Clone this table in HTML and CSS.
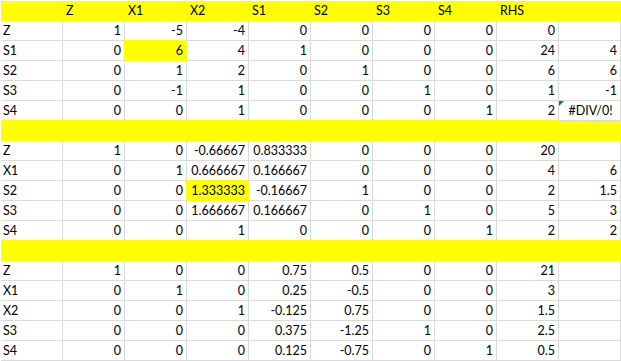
FILE: index.html
```html
<!DOCTYPE html>
<html lang="en">
<head>
<meta charset="utf-8">
<title>Simplex tableau</title>
<link rel="stylesheet" href="styles.css">
</head>
<body>
<div class="sheet">
  <div class="row head">
    <div class="c"></div><div class="c">Z</div><div class="c">X1</div><div class="c">X2</div><div class="c">S1</div><div class="c">S2</div><div class="c">S3</div><div class="c">S4</div><div class="c">RHS</div><div class="c"></div>
  </div>

  <div class="row"><div class="c t">Z</div><div class="c n">1</div><div class="c n">-5</div><div class="c n">-4</div><div class="c n">0</div><div class="c n">0</div><div class="c n">0</div><div class="c n">0</div><div class="c n">0</div><div class="c n"></div></div>
  <div class="row"><div class="c t">S1</div><div class="c n">0</div><div class="c n hl">6</div><div class="c n">4</div><div class="c n">1</div><div class="c n">0</div><div class="c n">0</div><div class="c n">0</div><div class="c n">24</div><div class="c n">4</div></div>
  <div class="row"><div class="c t">S2</div><div class="c n">0</div><div class="c n">1</div><div class="c n">2</div><div class="c n">0</div><div class="c n">1</div><div class="c n">0</div><div class="c n">0</div><div class="c n">6</div><div class="c n">6</div></div>
  <div class="row"><div class="c t">S3</div><div class="c n">0</div><div class="c n">-1</div><div class="c n">1</div><div class="c n">0</div><div class="c n">0</div><div class="c n">1</div><div class="c n">0</div><div class="c n">1</div><div class="c n">-1</div></div>
  <div class="row"><div class="c t">S4</div><div class="c n">0</div><div class="c n">0</div><div class="c n">1</div><div class="c n">0</div><div class="c n">0</div><div class="c n">0</div><div class="c n">1</div><div class="c n">2</div><div class="c err">#DIV/0!</div></div>

  <div class="band"></div>

  <div class="row"><div class="c t">Z</div><div class="c n">1</div><div class="c n">0</div><div class="c n">-0.66667</div><div class="c n">0.833333</div><div class="c n">0</div><div class="c n">0</div><div class="c n">0</div><div class="c n">20</div><div class="c n"></div></div>
  <div class="row"><div class="c t">X1</div><div class="c n">0</div><div class="c n">1</div><div class="c n">0.666667</div><div class="c n">0.166667</div><div class="c n">0</div><div class="c n">0</div><div class="c n">0</div><div class="c n">4</div><div class="c n">6</div></div>
  <div class="row"><div class="c t">S2</div><div class="c n">0</div><div class="c n">0</div><div class="c n hl">1.333333</div><div class="c n">-0.16667</div><div class="c n">1</div><div class="c n">0</div><div class="c n">0</div><div class="c n">2</div><div class="c n">1.5</div></div>
  <div class="row"><div class="c t">S3</div><div class="c n">0</div><div class="c n">0</div><div class="c n">1.666667</div><div class="c n">0.166667</div><div class="c n">0</div><div class="c n">1</div><div class="c n">0</div><div class="c n">5</div><div class="c n">3</div></div>
  <div class="row"><div class="c t">S4</div><div class="c n">0</div><div class="c n">0</div><div class="c n">1</div><div class="c n">0</div><div class="c n">0</div><div class="c n">0</div><div class="c n">1</div><div class="c n">2</div><div class="c n">2</div></div>

  <div class="band"></div>

  <div class="row"><div class="c t">Z</div><div class="c n">1</div><div class="c n">0</div><div class="c n">0</div><div class="c n">0.75</div><div class="c n">0.5</div><div class="c n">0</div><div class="c n">0</div><div class="c n">21</div><div class="c n"></div></div>
  <div class="row"><div class="c t">X1</div><div class="c n">0</div><div class="c n">1</div><div class="c n">0</div><div class="c n">0.25</div><div class="c n">-0.5</div><div class="c n">0</div><div class="c n">0</div><div class="c n">3</div><div class="c n"></div></div>
  <div class="row"><div class="c t">X2</div><div class="c n">0</div><div class="c n">0</div><div class="c n">1</div><div class="c n">-0.125</div><div class="c n">0.75</div><div class="c n">0</div><div class="c n">0</div><div class="c n">1.5</div><div class="c n"></div></div>
  <div class="row"><div class="c t">S3</div><div class="c n">0</div><div class="c n">0</div><div class="c n">0</div><div class="c n">0.375</div><div class="c n">-1.25</div><div class="c n">1</div><div class="c n">0</div><div class="c n">2.5</div><div class="c n"></div></div>
  <div class="row"><div class="c t">S4</div><div class="c n">0</div><div class="c n">0</div><div class="c n">0</div><div class="c n">0.125</div><div class="c n">-0.75</div><div class="c n">0</div><div class="c n">1</div><div class="c n">0.5</div><div class="c n"></div></div>
</div>
</body>
</html>
```
FILE: styles.css
```css
html, body {
  margin: 0;
  padding: 0;
  background: #ffffff;
}
body {
  padding: 1px 0 0 1px;
  font-family: "Lato", "Open Sans", sans-serif;
  font-size: 12.5px;
  color: #000000;
  overflow: hidden;
}
.sheet {
  display: flex;
  flex-direction: column;
  width: 620px;
}
.row {
  display: grid;
  grid-template-columns: repeat(10, 62px);
  height: 20px;
}
.c {
  box-sizing: border-box;
  height: 20px;
  border-right: 1px solid #dadada;
  border-bottom: 1px solid #dadada;
  padding: 1px 3px 0 2px;
  line-height: 18px;
  white-space: nowrap;
  overflow: hidden;
}
.n { text-align: right; }
.t { text-align: left; }
.head .c {
  background: #ffff00;
  border-color: #ffff00;
  padding-left: 3px;
}
.hl {
  background: #ffff00;
  border-color: #ffff00;
  box-shadow: -1px -1px 0 #ffff00;
}
.err {
  position: relative;
  text-align: center;
  padding-right: 0;
}
.err::before {
  content: "";
  position: absolute;
  left: 0;
  top: 0;
  width: 0;
  height: 0;
  border-top: 5px solid #107c41;
  border-right: 5px solid transparent;
}
.band {
  height: 20px;
  background: #ffff00;
  box-shadow: 0 -1px 0 #ffff00;
}
```
